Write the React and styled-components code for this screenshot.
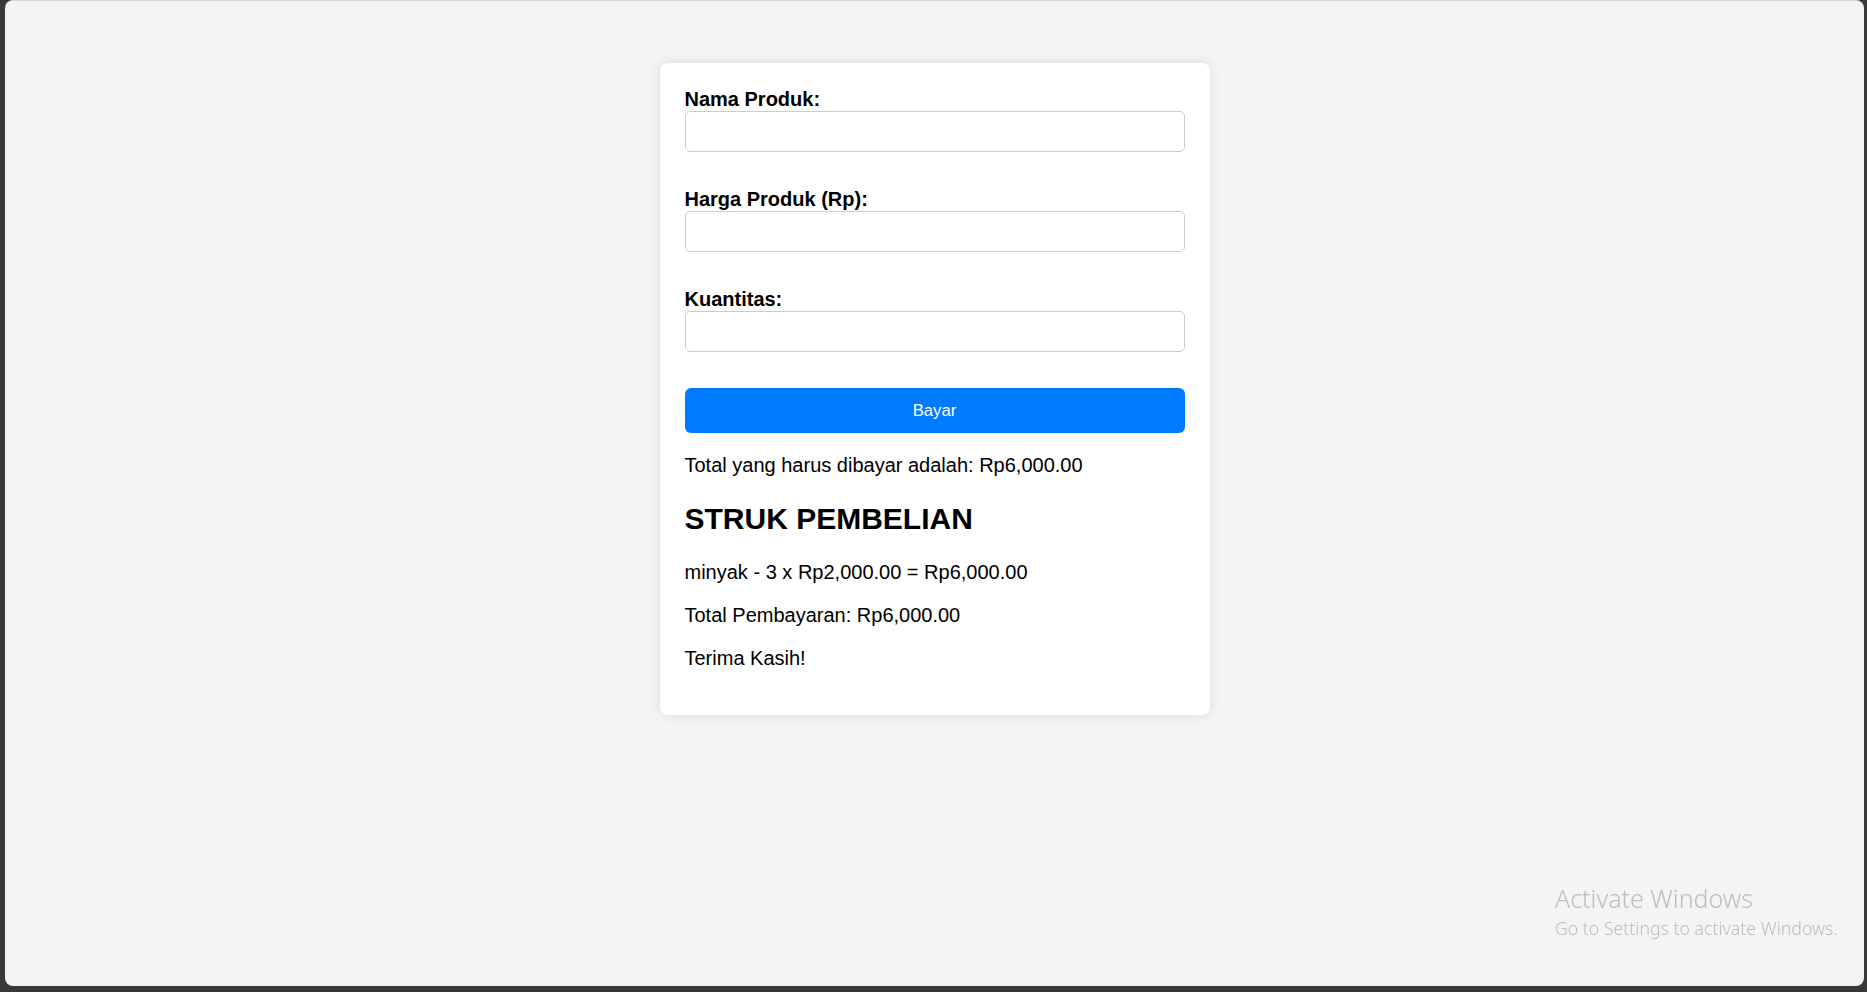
import React, { useState } from 'react';
import styled, { createGlobalStyle } from 'styled-components';

const GlobalStyle = createGlobalStyle`
  html, body {
    margin: 0;
    padding: 0;
    background: #383838;
  }
  * {
    box-sizing: border-box;
  }
`;

const Frame = styled.div`
  min-height: 100vh;
  display: flex;
  flex-direction: column;
  padding: 0 3px 6px 5px;
`;

const Screen = styled.div`
  flex: 1;
  background: #f4f4f4;
  border-top: 1px solid #d8d8d8;
  border-radius: 8px;
  font-family: "Liberation Sans", Arial, sans-serif;
  color: #000;
`;

const Card = styled.div`
  width: 550px;
  margin: 62px auto 0;
  padding: 25px;
  background: #fff;
  border-radius: 8px;
  box-shadow: 0 0 12px rgba(0, 0, 0, 0.1);
`;

const Label = styled.label`
  display: block;
  font-size: 20px;
  line-height: 23px;
  font-weight: bold;
`;

const Input = styled.input`
  display: block;
  width: 100%;
  height: 41px;
  margin: 0 0 36px;
  padding: 10px;
  border: 1px solid #ccc;
  border-radius: 5px;
  font-family: "Liberation Sans", Arial, sans-serif;
  font-size: 16px;
  outline: none;
`;

const PayButton = styled.button`
  display: block;
  width: 100%;
  height: 45px;
  border: none;
  border-radius: 6px;
  background: #007bff;
  color: #fff;
  font-family: "Liberation Sans", Arial, sans-serif;
  font-size: 16.7px;
  cursor: pointer;
`;

const Result = styled.div`
  margin-top: 21px;
`;

const Para = styled.p`
  margin: 20px 0;
  font-size: 20px;
  line-height: 23px;
`;

const ReceiptTitle = styled.h2`
  margin: 25px 0;
  font-size: 30px;
  line-height: 34px;
  font-weight: bold;
`;

const Watermark = styled.div`
  position: fixed;
  left: 1555px;
  top: 883px;
  font-family: "Noto Sans", "Open Sans", sans-serif;
  font-weight: 300;
  color: #bdbdbd;
  white-space: nowrap;
  pointer-events: none;
`;

const WatermarkTitle = styled.div`
  font-size: 25px;
  line-height: 30px;
`;

const WatermarkSub = styled.div`
  margin-top: 3px;
  font-size: 17.7px;
  line-height: 24px;
`;

const rupiah = (n) =>
  'Rp' + n.toLocaleString('en-US', { minimumFractionDigits: 2, maximumFractionDigits: 2 });

export default function App() {
  const [nama, setNama] = useState('');
  const [harga, setHarga] = useState('');
  const [qty, setQty] = useState('');
  const [struk, setStruk] = useState({ nama: 'minyak', harga: 2000, qty: 3 });

  const bayar = () => {
    const h = parseFloat(harga);
    const q = parseInt(qty, 10);
    if (!nama || isNaN(h) || isNaN(q)) return;
    setStruk({ nama, harga: h, qty: q });
  };

  const total = struk.harga * struk.qty;

  return (
    <>
      <GlobalStyle />
      <Frame>
        <Screen>
          <Card>
            <Label htmlFor="nama">Nama Produk:</Label>
            <Input id="nama" type="text" value={nama} onChange={(e) => setNama(e.target.value)} />

            <Label htmlFor="harga">Harga Produk (Rp):</Label>
            <Input id="harga" type="number" value={harga} onChange={(e) => setHarga(e.target.value)} />

            <Label htmlFor="qty">Kuantitas:</Label>
            <Input id="qty" type="number" value={qty} onChange={(e) => setQty(e.target.value)} />

            <PayButton onClick={bayar}>Bayar</PayButton>

            <Result>
              <Para>Total yang harus dibayar adalah: {rupiah(total)}</Para>
              <ReceiptTitle>STRUK PEMBELIAN</ReceiptTitle>
              <Para>
                {struk.nama} - {struk.qty} x {rupiah(struk.harga)} = {rupiah(total)}
              </Para>
              <Para>Total Pembayaran: {rupiah(total)}</Para>
              <Para>Terima Kasih!</Para>
            </Result>
          </Card>
        </Screen>
      </Frame>
      <Watermark>
        <WatermarkTitle>Activate Windows</WatermarkTitle>
        <WatermarkSub>Go to Settings to activate Windows.</WatermarkSub>
      </Watermark>
    </>
  );
}
